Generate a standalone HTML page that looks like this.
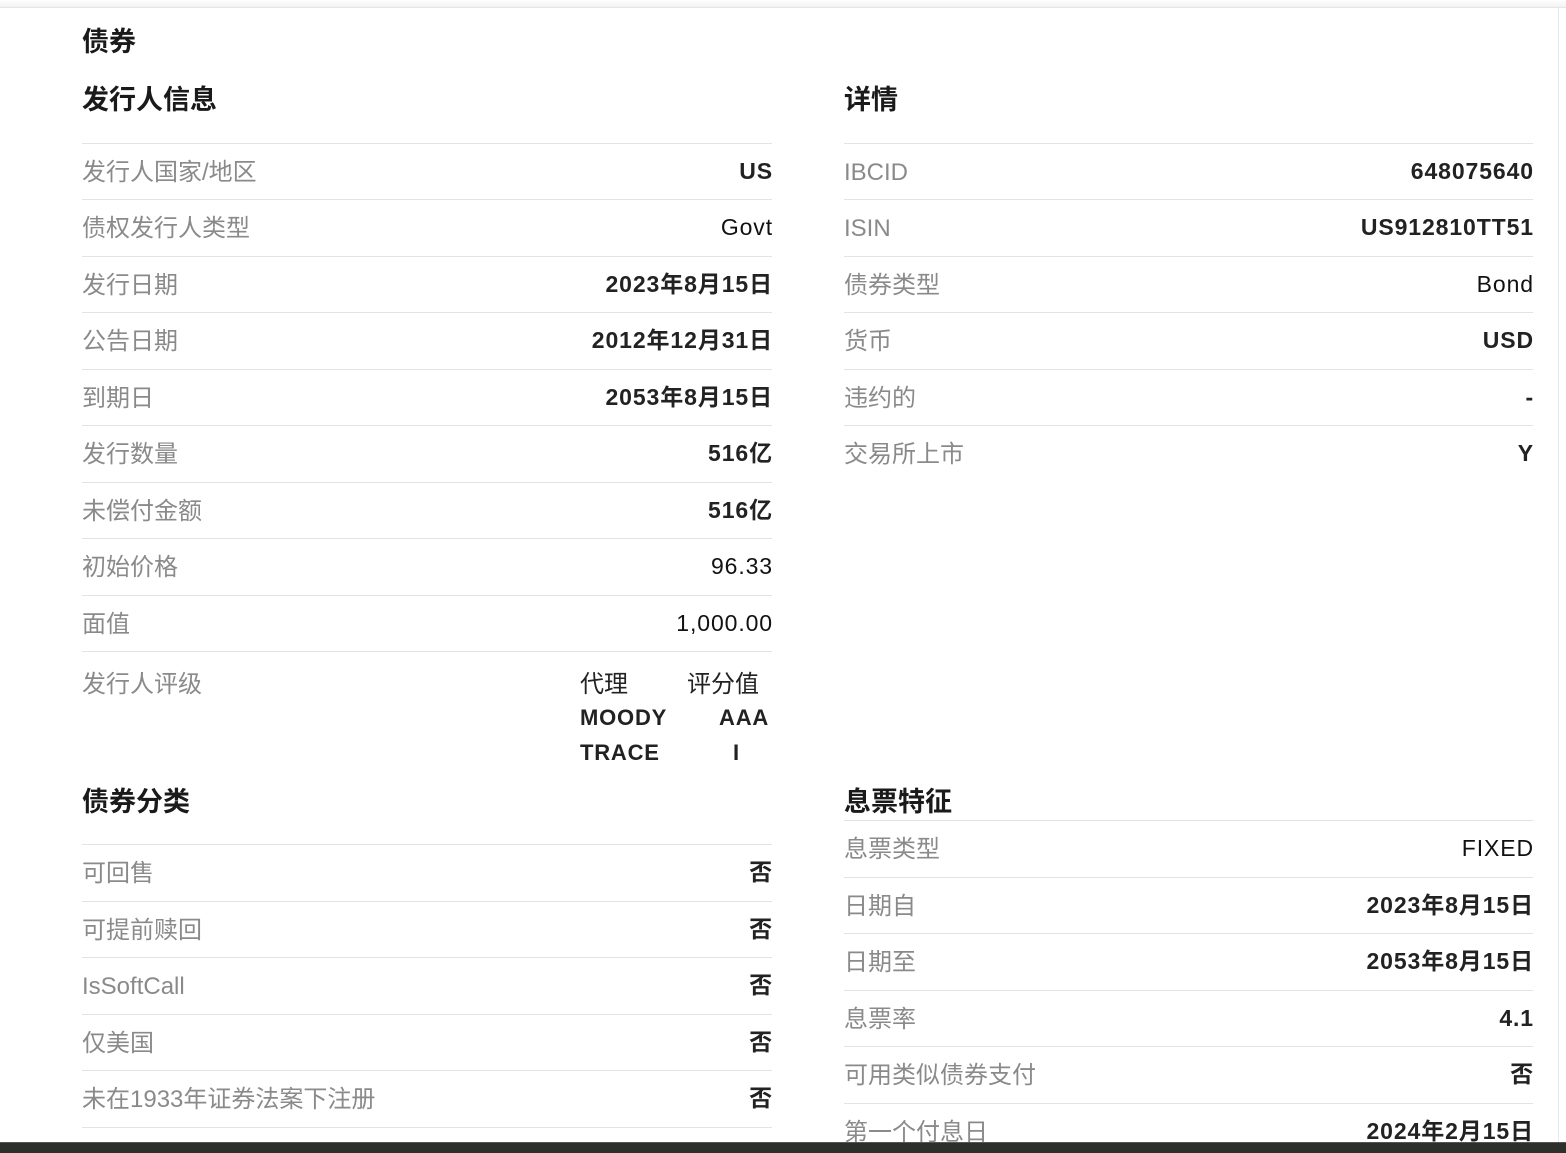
<!DOCTYPE html>
<html><head><meta charset="utf-8"><style>
html,body{margin:0;padding:0;background:#fff;width:1566px;height:1153px;overflow:hidden;position:relative;font-family:"Liberation Sans","Noto Sans CJK SC",sans-serif}
.top{position:absolute;left:0;top:0;width:1566px;height:7px;background:linear-gradient(#fff,#f2f2f2);border-bottom:1px solid #e6e6e6}
.vr{position:absolute;left:1558px;top:8px;width:1px;height:1134px;background:#e8e8e8}
.bot{position:absolute;left:0;top:1142px;width:1566px;height:11px;background:#2c2f2b;border-top:1px solid #555}
.h{position:absolute;font-weight:bold;color:#1a1a1a;font-size:27px;line-height:32px}
.r{position:absolute;height:56px;border-top:1px solid #e3e3e3;box-sizing:border-box}
.L{left:82px;width:690px}.R{left:844px;width:689px}
.r .k{position:absolute;left:0;top:13px;font-size:24px;color:#8a8a8a;line-height:32px}
.r .v{position:absolute;right:0;top:11px;font-size:23px;font-weight:bold;color:#222;line-height:32px;letter-spacing:0.9px;margin-right:-1px}
.r .n{font-weight:normal;color:#111}
.t{position:absolute;font-size:22px;color:#222;line-height:28px;letter-spacing:0.8px}
</style></head><body>
<div class="top"></div><div class="vr"></div>
<div class="h" style="left:82px;top:26px;font-size:27px">债券</div>
<div class="h" style="left:82px;top:84px">发行人信息</div>
<div class="h" style="left:844px;top:84px">详情</div>

<div class="r L" style="top:143px"><span class="k">发行人国家/地区</span><span class="v">US</span></div>
<div class="r L" style="top:199px"><span class="k">债权发行人类型</span><span class="v n">Govt</span></div>
<div class="r L" style="top:256px"><span class="k">发行日期</span><span class="v">2023年8月15日</span></div>
<div class="r L" style="top:312px"><span class="k">公告日期</span><span class="v">2012年12月31日</span></div>
<div class="r L" style="top:369px"><span class="k">到期日</span><span class="v">2053年8月15日</span></div>
<div class="r L" style="top:425px"><span class="k">发行数量</span><span class="v">516亿</span></div>
<div class="r L" style="top:482px"><span class="k">未偿付金额</span><span class="v">516亿</span></div>
<div class="r L" style="top:538px"><span class="k">初始价格</span><span class="v n">96.33</span></div>
<div class="r L" style="top:595px"><span class="k">面值</span><span class="v n">1,000.00</span></div>
<div class="r L" style="top:651px;height:120px;border-bottom:none"><span class="k" style="top:17px">发行人评级</span></div>
<div class="t" style="left:580px;top:671px;font-size:24px;letter-spacing:0">代理</div>
<div class="t" style="left:687px;top:671px;font-size:24px;letter-spacing:0">评分值</div>
<div class="t" style="left:580px;top:704px;font-weight:bold">MOODY</div>
<div class="t" style="left:719px;top:704px;font-weight:bold">AAA</div>
<div class="t" style="left:580px;top:739px;font-weight:bold">TRACE</div>
<div class="t" style="left:733px;top:739px;font-weight:bold">I</div>

<div class="r R" style="top:143px"><span class="k">IBCID</span><span class="v">648075640</span></div>
<div class="r R" style="top:199px"><span class="k">ISIN</span><span class="v">US912810TT51</span></div>
<div class="r R" style="top:256px"><span class="k">债券类型</span><span class="v n">Bond</span></div>
<div class="r R" style="top:312px"><span class="k">货币</span><span class="v">USD</span></div>
<div class="r R" style="top:369px"><span class="k">违约的</span><span class="v">-</span></div>
<div class="r R" style="top:425px"><span class="k">交易所上市</span><span class="v">Y</span></div>

<div class="h" style="left:82px;top:786px">债券分类</div>
<div class="r L" style="top:844px"><span class="k">可回售</span><span class="v">否</span></div>
<div class="r L" style="top:901px"><span class="k">可提前赎回</span><span class="v">否</span></div>
<div class="r L" style="top:957px"><span class="k">IsSoftCall</span><span class="v">否</span></div>
<div class="r L" style="top:1014px"><span class="k">仅美国</span><span class="v">否</span></div>
<div class="r L" style="top:1070px"><span class="k">未在1933年证券法案下注册</span><span class="v">否</span></div>
<div class="r L" style="top:1127px"></div>

<div class="h" style="left:844px;top:786px">息票特征</div>
<div class="r R" style="top:820px"><span class="k">息票类型</span><span class="v n">FIXED</span></div>
<div class="r R" style="top:877px"><span class="k">日期自</span><span class="v">2023年8月15日</span></div>
<div class="r R" style="top:933px"><span class="k">日期至</span><span class="v">2053年8月15日</span></div>
<div class="r R" style="top:990px"><span class="k">息票率</span><span class="v">4.1</span></div>
<div class="r R" style="top:1046px"><span class="k">可用类似债券支付</span><span class="v">否</span></div>
<div class="r R" style="top:1103px"><span class="k">第一个付息日</span><span class="v">2024年2月15日</span></div>
<div class="bot"></div>
</body></html>
